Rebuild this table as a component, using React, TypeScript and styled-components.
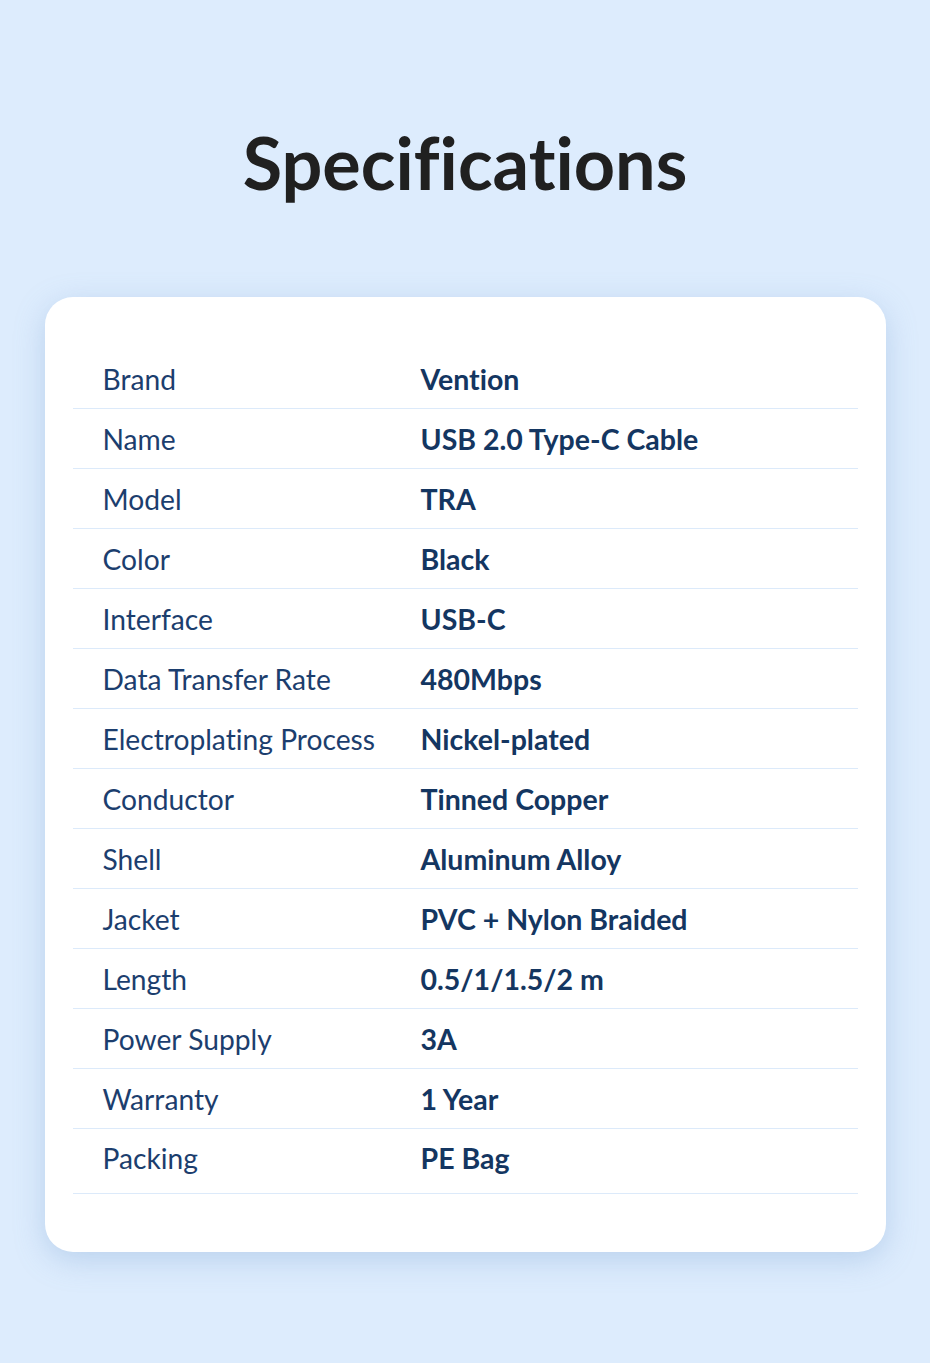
import React from "react";
import styled, { createGlobalStyle } from "styled-components";

const Global = createGlobalStyle`
  html, body { margin: 0; padding: 0; }
  body { background: #ddecfd; }
`;

const Page = styled.div`
  width: 930px;
  height: 1363px;
  box-sizing: border-box;
  background: #ddecfd;
  padding-top: 122px;
  display: flex;
  flex-direction: column;
  align-items: center;
`;

const Title = styled.h1`
  margin: 0;
  font-family: "Lato", sans-serif;
  font-weight: 700;
  font-size: 72px;
  line-height: 80px;
  color: #202020;
  font-variant-ligatures: none;
  font-feature-settings: "liga" 0, "clig" 0;
`;

const Card = styled.div`
  margin-top: 95px;
  width: 841px;
  box-sizing: border-box;
  background: #ffffff;
  border-radius: 28px;
  box-shadow: 0 8px 30px rgba(120, 160, 210, 0.35);
  padding: 52px 28px 58px 28px;
`;

const Row = styled.div<{ $tall?: boolean }>`
  display: grid;
  grid-template-columns: 318px 1fr;
  box-sizing: border-box;
  height: ${(p) => (p.$tall ? "65px" : "60px")};
  padding-bottom: ${(p) => (p.$tall ? "6px" : "0")};
  align-items: center;
  border-bottom: 1.5px solid #dceafa;
  padding-left: 30px;
`;

const Label = styled.span`
  font-family: "Lato", sans-serif;
  font-weight: 400;
  font-size: 28.2px;
  color: #1c3e6e;
  font-variant-ligatures: none;
`;

const Value = styled.span`
  font-family: "Lato", sans-serif;
  font-weight: 700;
  font-size: 28.5px;
  color: #143661;
  font-variant-ligatures: none;
`;

const specs: [string, string][] = [
  ["Brand", "Vention"],
  ["Name", "USB 2.0 Type-C Cable"],
  ["Model", "TRA"],
  ["Color", "Black"],
  ["Interface", "USB-C"],
  ["Data Transfer Rate", "480Mbps"],
  ["Electroplating Process", "Nickel-plated"],
  ["Conductor", "Tinned Copper"],
  ["Shell", "Aluminum Alloy"],
  ["Jacket", "PVC + Nylon Braided"],
  ["Length", "0.5/1/1.5/2 m"],
  ["Power Supply", "3A"],
  ["Warranty", "1 Year"],
  ["Packing", "PE Bag"],
];

export default function App() {
  return (
    <Page>
      <Global />
      <Title>Specifications</Title>
      <Card>
        {specs.map(([k, v], i) => (
          <Row key={k} $tall={i === specs.length - 1}>
            <Label>{k}</Label>
            <Value>{v}</Value>
          </Row>
        ))}
      </Card>
    </Page>
  );
}
